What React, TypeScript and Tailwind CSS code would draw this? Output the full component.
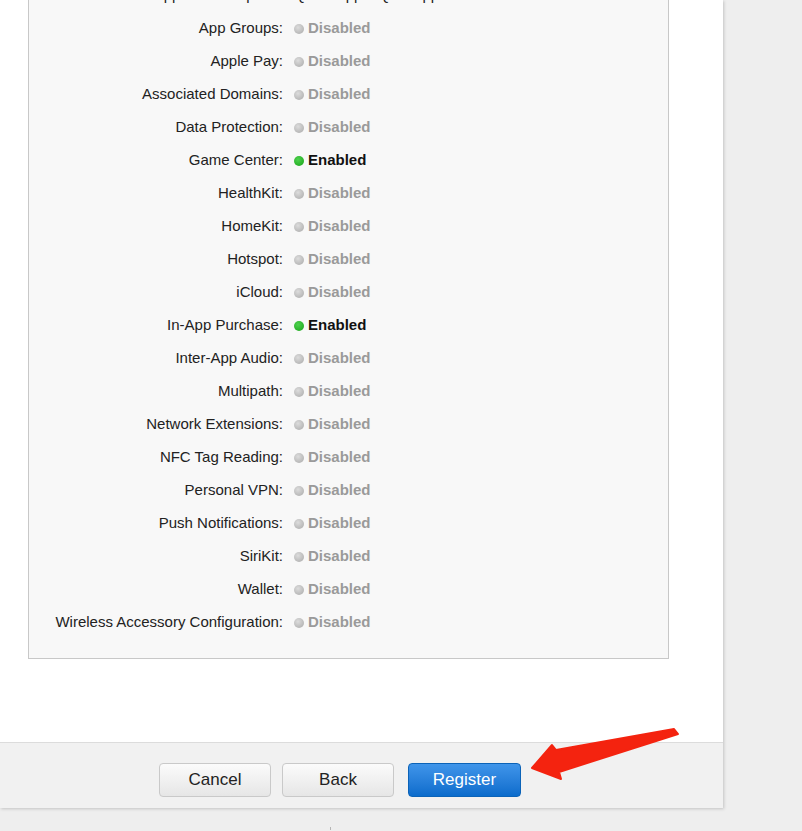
import React from 'react';

type Service = { name: string; enabled: boolean };

const SERVICES: Service[] = [
  { name: 'App Groups', enabled: false },
  { name: 'Apple Pay', enabled: false },
  { name: 'Associated Domains', enabled: false },
  { name: 'Data Protection', enabled: false },
  { name: 'Game Center', enabled: true },
  { name: 'HealthKit', enabled: false },
  { name: 'HomeKit', enabled: false },
  { name: 'Hotspot', enabled: false },
  { name: 'iCloud', enabled: false },
  { name: 'In-App Purchase', enabled: true },
  { name: 'Inter-App Audio', enabled: false },
  { name: 'Multipath', enabled: false },
  { name: 'Network Extensions', enabled: false },
  { name: 'NFC Tag Reading', enabled: false },
  { name: 'Personal VPN', enabled: false },
  { name: 'Push Notifications', enabled: false },
  { name: 'SiriKit', enabled: false },
  { name: 'Wallet', enabled: false },
  { name: 'Wireless Accessory Configuration', enabled: false },
];

function StatusDot({ enabled }: { enabled: boolean }) {
  return (
    <span
      className={
        enabled
          ? 'inline-block w-[10px] h-[10px] rounded-full bg-[radial-gradient(circle_at_40%_35%,#4fd14f,#17a317)]'
          : 'inline-block w-[10px] h-[10px] rounded-full bg-[radial-gradient(circle_at_40%_35%,#dcdcdc,#a9a9a9)]'
      }
    />
  );
}

function ServiceRow({ service }: { service: Service }) {
  return (
    <div className="flex items-center h-[33px]">
      <div className="w-[254px] text-right text-[15px] text-[#222]">{service.name}:</div>
      <div className="ml-[11px] flex items-center gap-[4px]">
        <StatusDot enabled={service.enabled} />
        <span className={service.enabled ? 'text-[15px] font-bold text-[#111]' : 'text-[15px] font-bold text-[#9a9a9a]'}>
          {service.enabled ? 'Enabled' : 'Disabled'}
        </span>
      </div>
    </div>
  );
}

function Button({ children, primary }: { children: React.ReactNode; primary?: boolean }) {
  return (
    <button
      className={
        primary
          ? 'h-[34px] w-[113px] rounded-[4px] border border-[#0b63b8] bg-gradient-to-b from-[#3f95ea] to-[#0a6ccc] text-[17px] text-white'
          : 'h-[34px] w-[112px] rounded-[4px] border border-[#c9c9c9] bg-gradient-to-b from-[#fbfbfb] to-[#e6e6e6] text-[17px] text-[#222]'
      }
    >
      {children}
    </button>
  );
}

export default function App() {
  return (
    <div className="relative min-h-[831px] bg-[#eeeeee] font-['Liberation_Sans',Arial,sans-serif]">
      {/* Main card */}
      <div className="w-[723px] h-[808px] bg-white overflow-hidden flex flex-col shadow-[1px_1px_3px_rgba(0,0,0,0.18)]">
        <div className="flex-1 pl-[28px]">
          {/* Services panel, scrolled so its top is out of view */}
          <div className="-mt-[34px] w-[641px] border border-[#c8c8c8] bg-[#f8f8f8] pt-[12px] pb-[19px]">
            <div className="flex items-center h-[33px]">
              <div className="w-[254px] text-right text-[15px] text-[#222]">App ID Description:</div>
              <div className="ml-[11px] text-[15px] text-[#222]">Quick Apple Quiz App</div>
            </div>
            {SERVICES.map((s) => (
              <ServiceRow key={s.name} service={s} />
            ))}
          </div>
        </div>

        {/* Footer */}
        <div className="h-[66px] border-t border-[#dcdcdc] bg-[#f1f1f1] flex items-center pl-[159px] pt-[8px]">
          <Button>Cancel</Button>
          <div className="ml-[11px]">
            <Button>Back</Button>
          </div>
          <div className="ml-[14px]">
            <Button primary>Register</Button>
          </div>
        </div>
      </div>

      <div className="ml-[330px] mt-[19px] w-px h-[3px] bg-[#b5b5b5]" />

      {/* Annotation arrow */}
      <svg className="absolute left-[528px] top-[728px]" width="155" height="56" viewBox="0 0 155 56">
        <path
          d="M150 6 L146 1 L28 22 L24 17 L4 40 L33 51 L31 44 Z"
          fill="#f4230f"
          stroke="#f4230f"
          strokeWidth="2"
          strokeLinejoin="round"
        />
      </svg>
    </div>
  );
}
